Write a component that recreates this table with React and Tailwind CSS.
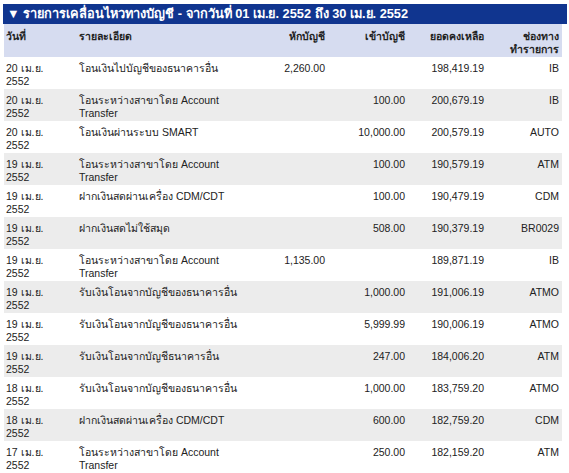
import React from 'react'

const rows = [
  { d: '20', desc: ['โอนเงินไปบัญชีของธนาคารอื่น'], dr: '2,260.00', cr: '', bal: '198,419.19', ch: 'IB' },
  { d: '20', desc: ['โอนระหว่างสาขาโดย Account', 'Transfer'], dr: '', cr: '100.00', bal: '200,679.19', ch: 'IB' },
  { d: '20', desc: ['โอนเงินผ่านระบบ SMART'], dr: '', cr: '10,000.00', bal: '200,579.19', ch: 'AUTO' },
  { d: '19', desc: ['โอนระหว่างสาขาโดย Account', 'Transfer'], dr: '', cr: '100.00', bal: '190,579.19', ch: 'ATM' },
  { d: '19', desc: ['ฝากเงินสดผ่านเครื่อง CDM/CDT'], dr: '', cr: '100.00', bal: '190,479.19', ch: 'CDM' },
  { d: '19', desc: ['ฝากเงินสดไม่ใช้สมุด'], dr: '', cr: '508.00', bal: '190,379.19', ch: 'BR0029' },
  { d: '19', desc: ['โอนระหว่างสาขาโดย Account', 'Transfer'], dr: '1,135.00', cr: '', bal: '189,871.19', ch: 'IB' },
  { d: '19', desc: ['รับเงินโอนจากบัญชีของธนาคารอื่น'], dr: '', cr: '1,000.00', bal: '191,006.19', ch: 'ATMO' },
  { d: '19', desc: ['รับเงินโอนจากบัญชีของธนาคารอื่น'], dr: '', cr: '5,999.99', bal: '190,006.19', ch: 'ATMO' },
  { d: '19', desc: ['รับเงินโอนจากบัญชีธนาคารอื่น'], dr: '', cr: '247.00', bal: '184,006.20', ch: 'ATM' },
  { d: '18', desc: ['รับเงินโอนจากบัญชีของธนาคารอื่น'], dr: '', cr: '1,000.00', bal: '183,759.20', ch: 'ATMO' },
  { d: '18', desc: ['ฝากเงินสดผ่านเครื่อง CDM/CDT'], dr: '', cr: '600.00', bal: '182,759.20', ch: 'CDM' },
  { d: '17', desc: ['โอนระหว่างสาขาโดย Account', 'Transfer'], dr: '', cr: '250.00', bal: '182,159.20', ch: 'ATM' },
]

export default function App() {
  return (
    <div className="h-[473px] overflow-hidden bg-white pt-1 pl-[3px] font-['Liberation_Sans',Tahoma,sans-serif] text-[10.5px] leading-[13px] text-[#222]">
      {/* Title bar */}
      <div className="w-[564px] h-5 bg-[#10358f] text-white font-bold text-[12.8px] leading-5 pl-1 whitespace-nowrap">
        ▼ รายการเคลื่อนไหวทางบัญชี - จากวันที่ 01 เม.ย. 2552 ถึง 30 เม.ย. 2552
      </div>

      <table className="ml-px w-[558px] table-fixed border-collapse">
        <colgroup>
          <col className="w-[71px]" />
          <col className="w-[170px]" />
          <col className="w-[83px]" />
          <col className="w-[80px]" />
          <col className="w-[79px]" />
          <col className="w-[75px]" />
        </colgroup>
        <thead>
          <tr className="h-[33px] bg-[#d6dcf0] align-top text-[#222]">
            <th className="text-left pl-0.5 pt-1.5 font-bold">วันที่</th>
            <th className="text-left pl-[4px] pt-1.5 font-bold">รายละเอียด</th>
            <th className="text-right pr-[3px] pt-1.5 font-bold">หักบัญชี</th>
            <th className="text-right pr-[3px] pt-1.5 font-bold">เข้าบัญชี</th>
            <th className="text-right pr-[3px] pt-1.5 font-bold">ยอดคงเหลือ</th>
            <th className="text-right pr-[3px] pt-1.5 font-bold">ช่องทาง<br />ทำรายการ</th>
          </tr>
        </thead>
        <tbody>
          {rows.map((r, i) => (
            <tr key={i} className={`h-8 align-top ${i % 2 ? 'bg-[#ececec]' : 'bg-white'}`}>
              <td className="pl-0.5 pt-[5px] whitespace-nowrap">{r.d} เม.ย.<br />2552</td>
              <td className="pl-[4px] pt-[5px] whitespace-nowrap">
                {r.desc.map((t, j) => (
                  <div key={j}>{t}</div>
                ))}
              </td>
              <td className="text-right pr-[3px] pt-[5px]">{r.dr}</td>
              <td className="text-right pr-[3px] pt-[5px]">{r.cr}</td>
              <td className="text-right pr-[3px] pt-[5px]">{r.bal}</td>
              <td className="text-right pr-[3px] pt-[5px]">{r.ch}</td>
            </tr>
          ))}
        </tbody>
      </table>
    </div>
  )
}
